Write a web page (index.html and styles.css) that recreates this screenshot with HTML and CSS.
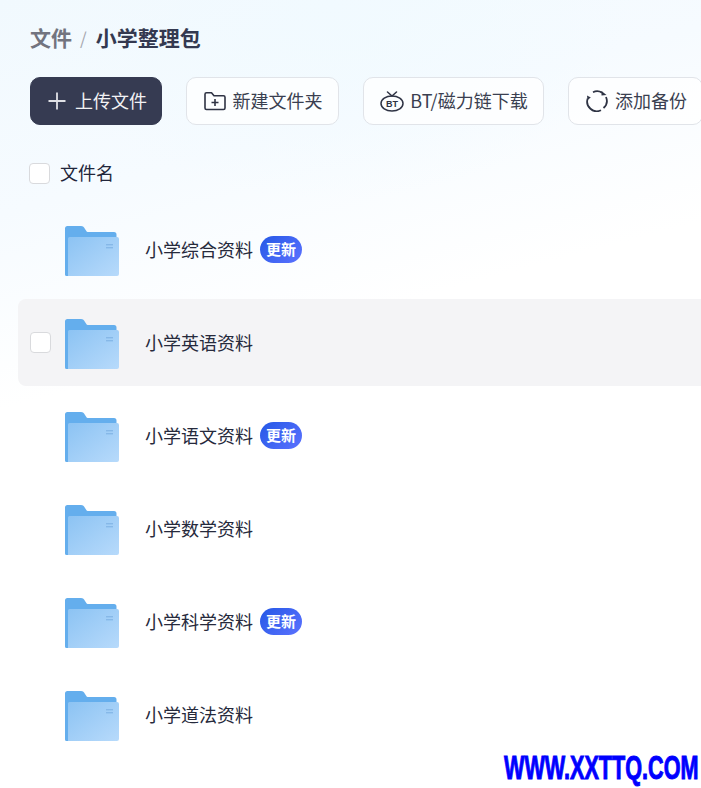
FILE: index.html
```html
<!DOCTYPE html>
<html lang="zh">
<head>
<meta charset="utf-8">
<title>小学整理包</title>
<link rel="stylesheet" href="styles.css">
</head>
<body>
<svg class="defs" width="0" height="0" aria-hidden="true">
  <defs>
    <linearGradient id="fold" x1="0" y1="0" x2="1" y2="1">
      <stop offset="0" stop-color="#8cc3f3"/>
      <stop offset="1" stop-color="#b7dafb"/>
    </linearGradient>
    <symbol id="folder" viewBox="0 0 54 50">
      <path d="M0 2.500A2.500 2.500 0 0 1 2.500 0H16c2 0 3 1 4 3l1 1.500c.6 1 1.200 1.500 2.500 1.500H49a2.500 2.500 0 0 1 2.500 2.500V14H0Z" fill="#64aeed"/>
      <path d="M0 10H4V50H1.500A1.500 1.500 0 0 1 0 48.500Z" fill="#64aeed"/>
      <path d="M3 12.500A1.500 1.500 0 0 1 4.500 11H52a2 2 0 0 1 2 2V48a2 2 0 0 1-2 2H3Z" fill="url(#fold)"/>
      <rect x="41" y="18" width="7" height="1.400" fill="#86b8e8"/>
      <rect x="41" y="21" width="7" height="1.400" fill="#86b8e8"/>
    </symbol>
  </defs>
</svg>
<main class="page">
  <nav class="crumbs">
    <span class="crumb-root">文件</span>
    <span class="crumb-sep">/</span>
    <span class="crumb-current">小学整理包</span>
  </nav>
  <div class="toolbar">
    <button class="btn btn-primary">
      <svg class="icon-plus" width="20" height="20" viewBox="0 0 20 20"><path d="M10 1.500V18.500M1.500 10H18.500" stroke="#e0e1e6" stroke-width="1.800" fill="none"/></svg>
      <span>上传文件</span>
    </button>
    <button class="btn btn-new">
      <svg width="22" height="20" viewBox="0 0 22 20" fill="none" stroke="#2e3344" stroke-width="1.600"><path d="M1 3.200A1.500 1.500 0 0 1 2.500 1.700H7.500L10 4.700H19.500A1.500 1.500 0 0 1 21 6.200V17A1.500 1.500 0 0 1 19.500 18.500H2.500A1.500 1.500 0 0 1 1 17Z" stroke-linejoin="round"/><path d="M11 8V15M7.500 11.500H14.500"/></svg>
      <span>新建文件夹</span>
    </button>
    <button class="btn btn-bt">
      <svg width="24" height="21" viewBox="0 0 24 21" fill="none" stroke="#2e3344" stroke-width="1.500"><path d="M7.500 1L12 5L16.500 1" stroke-linecap="round"/><ellipse cx="12" cy="12.500" rx="11" ry="7.500"/><text class="bt-text" x="12" y="16.300" text-anchor="middle">BT</text></svg>
      <span>BT/磁力链下载</span>
    </button>
    <button class="btn btn-backup">
      <svg width="22" height="22" viewBox="0 0 22 22" fill="none" stroke="#2e3344" stroke-width="1.800"><path d="M7 2.200A9.600 9.600 0 0 1 16 2.600"/><path d="M20 7A9.600 9.600 0 0 1 17.500 18"/><path d="M15 20.200A9.600 9.600 0 0 1 1.700 8.500"/><path d="M1.500 10L1 5.500L4.800 7.500Z" fill="#2e3344" stroke="none"/><path d="M15.500 1L20.500 5L15.500 5.500Z" fill="#2e3344" stroke="none"/></svg>
      <span>添加备份</span>
    </button>
  </div>
  <div class="list-head">
    <span class="check"></span>
    <span class="head-label">文件名</span>
  </div>
  <ul class="list">
    <li class="row">
      <span class="check-slot"></span>
      <svg class="folder" width="54" height="50"><use href="#folder"/></svg>
      <span class="name">小学综合资料</span>
      <span class="badge">更新</span>
    </li>
    <li class="row row-hover">
      <span class="check-slot"><span class="check"></span></span>
      <svg class="folder" width="54" height="50"><use href="#folder"/></svg>
      <span class="name">小学英语资料</span>
    </li>
    <li class="row">
      <span class="check-slot"></span>
      <svg class="folder" width="54" height="50"><use href="#folder"/></svg>
      <span class="name">小学语文资料</span>
      <span class="badge">更新</span>
    </li>
    <li class="row">
      <span class="check-slot"></span>
      <svg class="folder" width="54" height="50"><use href="#folder"/></svg>
      <span class="name">小学数学资料</span>
    </li>
    <li class="row">
      <span class="check-slot"></span>
      <svg class="folder" width="54" height="50"><use href="#folder"/></svg>
      <span class="name">小学科学资料</span>
      <span class="badge">更新</span>
    </li>
    <li class="row">
      <span class="check-slot"></span>
      <svg class="folder" width="54" height="50"><use href="#folder"/></svg>
      <span class="name">小学道法资料</span>
    </li>
  </ul>
  <div class="watermark">WWW.XXTTQ.COM</div>
</main>
</body>
</html>
```
FILE: styles.css
```css
* { box-sizing: border-box; }
html, body { margin: 0; padding: 0; height: 100%; }
body {
  overflow: hidden;
  background: #fff;
  font-family: "Noto Sans CJK SC", "Liberation Sans", sans-serif;
  color: #262b3d;
}
.defs { position: absolute; }
.page {
  position: relative;
  width: 701px;
  height: 788px;
  overflow: hidden;
  padding: 22px 0 0 30px;
  background:
    radial-gradient(ellipse 300px 200px at 330px 0, #f1faff 0%, rgba(241,250,255,0) 100%),
    linear-gradient(165deg, #f1f9fe 0%, #f6fbff 22%, #ffffff 42%);
}
.crumbs {
  display: flex;
  align-items: center;
  height: 30px;
  font-size: 21px;
  line-height: 30px;
  font-weight: 700;
}
.crumb-root { color: #72747f; }
.crumb-sep { margin: 2px 9px 0 8px; color: #a5a7ae; font-size: 17px; font-weight: 400; }
.crumb-current { color: #343950; }
.toolbar {
  display: flex;
  gap: 24px;
  width: 720px;
  margin-top: 25px;
}
.btn {
  display: flex;
  flex: none;
  align-items: center;
  justify-content: center;
  height: 48px;
  padding: 0;
  border: 1px solid #e1e4e9;
  border-radius: 10px;
  background: rgba(255,255,255,.75);
  color: #3a3f50;
  font: inherit;
  font-size: 18px;
}
.btn span { position: relative; top: -1px; }
.btn-primary { width: 132px; gap: 8px; padding-left: 2px; background: #363b52; border-color: #363b52; color: #f2f2f4; }
.btn-new { width: 153px; gap: 7px; padding-left: 1px; }
.btn-bt { width: 181px; gap: 6px; padding-left: 1px; }
.btn-backup { width: 135px; gap: 7px; padding-left: 2px; }
.bt-text { font: 700 9px "Liberation Sans", sans-serif; fill: #2e3344; stroke: none; }
.list-head {
  display: flex;
  align-items: center;
  gap: 10px;
  height: 30px;
  margin-top: 33px;
  font-size: 18px;
  color: #22263a;
}
.head-label { position: relative; top: -1px; }
.check {
  display: block;
  flex: none;
  width: 21px;
  height: 21px;
  border: 1px solid #d9dadd;
  border-radius: 4px;
  background: #fff;
}
.list-head .check { margin-left: -1px; }
.list {
  display: flex;
  flex-direction: column;
  gap: 6px;
  margin: 18px 0 0 -12px;
  padding: 0;
  list-style: none;
}
.row {
  display: flex;
  align-items: center;
  height: 87px;
  border-radius: 8px 0 0 8px;
  padding-left: 12px;
}
.row-hover { background: #f4f4f6; }
.check-slot { flex: none; width: 35px; }
.folder { flex: none; margin-top: 2px; }
.name {
  position: relative;
  top: -1px;
  margin-left: 26px;
  font-size: 18px;
  color: #262a3c;
}
.badge {
  margin-left: 7px;
  width: 42px;
  height: 27px;
  margin-top: -1px;
  border-radius: 14px;
  background: linear-gradient(135deg, #2458e6 0%, #5c72ff 100%);
  color: #fff;
  font-size: 15px;
  font-weight: 700;
  line-height: 26px;
  text-align: center;
}
.watermark {
  position: absolute;
  left: 504px;
  top: 749px;
  color: #0000ff;
  font: 700 33px/38px "Liberation Sans", sans-serif;
  transform: scaleX(.655);
  transform-origin: left center;
  -webkit-text-stroke: 1px #0000ff;
  white-space: nowrap;
}
```
